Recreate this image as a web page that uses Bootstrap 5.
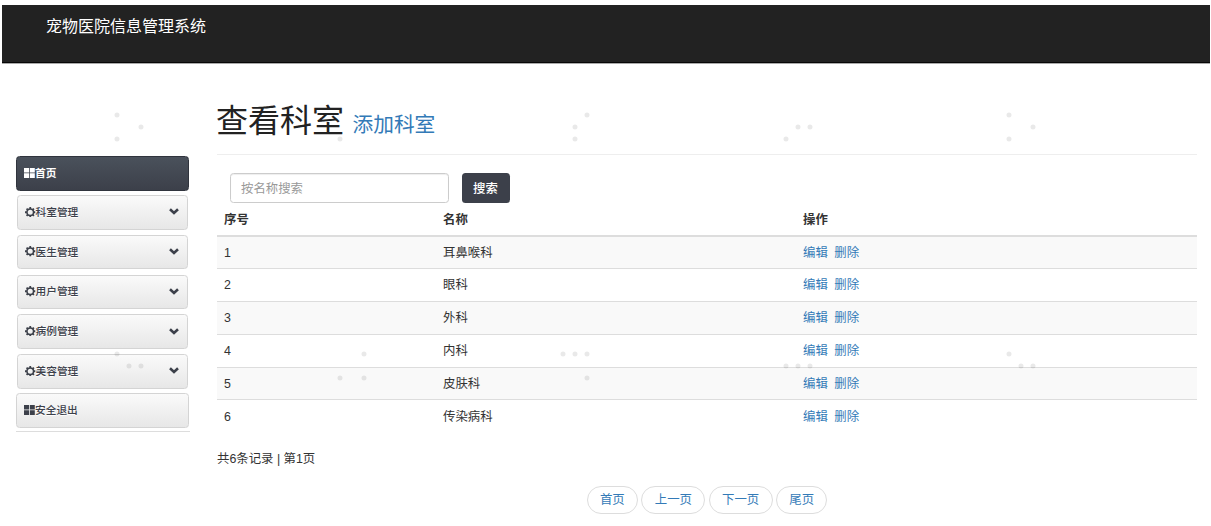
<!DOCTYPE html>
<html lang="zh-CN">
<head>
<meta charset="utf-8">
<meta name="viewport" content="width=device-width, initial-scale=1">
<title>宠物医院信息管理系统</title>
<link href="https://cdn.jsdelivr.net/npm/bootstrap@5.3.0/dist/css/bootstrap.min.css" rel="stylesheet">
<style>
body{font-family:"Liberation Sans","Noto Sans CJK SC",sans-serif;font-size:12.4px;line-height:17.7px;color:#333;background:#fff;height:526px;overflow:hidden;padding:5px 1px 0 2px}
a{color:#337ab7;text-decoration:none}
.topbar{height:58px;background:#222;border-bottom:1px solid #080808;box-shadow:0 1px 0 #aaa;padding:0 44px}
.topbar .navbar-brand{font-size:16px;line-height:20px;padding:0;margin-top:12px;color:#fff}
.side{width:174px;margin-left:14px;margin-top:93px;flex:none;height:276px;border-bottom:1px solid #ddd}
.side-link{height:34.6px;flex:none;border:1px solid #d4d4d4;border-radius:3.5px;background:linear-gradient(#fafafa,#e7e7e7);color:#3c404a;font-size:10.7px;font-weight:500;line-height:16px;padding:0 8px 1px 7px;margin:0 2px 5.2px 1px;text-shadow:0 1px 0 #fff}
.side-link.wide{margin:0 1px 4.4px 0;padding-right:7px}
.side-link:nth-child(6){margin-bottom:4.4px}
.side-link.active{background:linear-gradient(#4a515b,#3c404a);border-color:#30343d;color:#fff;font-weight:700;text-shadow:none}
.side-link svg{flex:none}
.main{margin-left:27px;width:980px}
.page-title{height:92px;border-bottom:1px solid #eee;padding-top:37px;margin:0;font-size:32px;line-height:42px;font-weight:400;color:#222;white-space:nowrap;text-indent:-1px}
.page-title a{font-size:20.7px;margin-left:8.5px}
.search{padding:18px 0 0 13px;gap:13px}
.search .form-control{width:219px;height:30px;font-size:12.4px;line-height:18px;padding:6px 10px 4px;border-color:#ccc;border-radius:3.5px;box-shadow:inset 0 1px 1px rgba(0,0,0,.07)}
.search .form-control::placeholder{color:#999;opacity:1}
.search .btn{width:48px;height:30px;background:#3c404a;color:#fff;font-size:12.4px;font-weight:500;line-height:18px;padding:6px 1px 4px 0;border:0;border-radius:3.5px}
.dept{width:980px;table-layout:fixed;margin:0;color:#333}
.dept>:not(caption)>*>*{padding:1px 7px 0;height:32.8px;border-bottom:1px solid #ddd;vertical-align:middle;line-height:17px}
.dept>thead>tr>th{height:33px;border-bottom:2px solid #ddd;font-weight:700;padding-top:2px}
.dept>tbody>tr:last-child>*{border-bottom:0}
.dept>tbody>tr:nth-of-type(odd)>*{background:#f9f9f9;box-shadow:none}
.dept td a+a{margin-left:6.5px}
.count{margin:17.5px 0 0;line-height:18px}
.pager{gap:3.5px;margin:17.5px 0 0}
.pager .page-link{height:28.5px;border:1px solid #ddd;border-radius:14px;padding:4.5px 12.3px;font-size:12.4px;line-height:18px;color:#337ab7;background:#fff}
.dots{left:0;top:0;pointer-events:none}
</style>
</head>
<body>
<nav class="topbar navbar align-items-start"><a class="navbar-brand" href="#">宠物医院信息管理系统</a></nav>
<svg width="0" height="0" class="position-absolute">
<symbol id="gear" viewBox="0 0 10 10"><circle cx="5" cy="5" r="3.1" fill="none" stroke="currentColor" stroke-width="1.4"/><path d="M5 0v1.8M5 8.2V10M0 5h1.8M8.2 5H10M1.5 1.5l1.2 1.2M7.3 7.3l1.2 1.2M8.5 1.5L7.3 2.7M2.7 7.3L1.5 8.5" stroke="currentColor" stroke-width="1.7"/></symbol>
<symbol id="grid" viewBox="0 0 11 10"><path d="M0 0h5v4.5H0zM5.8 0h5v4.5h-5zM0 5.3h5V10H0zM5.8 5.3h5V10h-5z" fill="currentColor"/></symbol>
<symbol id="chev" viewBox="0 0 10 7"><path d="M1 1.3l4 3.7 4-3.7" fill="none" stroke="currentColor" stroke-width="2.6"/></symbol>
</svg>
<div class="d-flex">
<aside class="side d-flex flex-column">
<a href="#" class="side-link wide active d-flex align-items-center"><svg width="11" height="10"><use href="#grid"/></svg><span>首页</span></a>
<a href="#" class="side-link d-flex align-items-center"><svg width="10.5" height="10.5"><use href="#gear"/></svg><span>科室管理</span><svg class="ms-auto" width="10" height="7"><use href="#chev"/></svg></a>
<a href="#" class="side-link d-flex align-items-center"><svg width="10.5" height="10.5"><use href="#gear"/></svg><span>医生管理</span><svg class="ms-auto" width="10" height="7"><use href="#chev"/></svg></a>
<a href="#" class="side-link d-flex align-items-center"><svg width="10.5" height="10.5"><use href="#gear"/></svg><span>用户管理</span><svg class="ms-auto" width="10" height="7"><use href="#chev"/></svg></a>
<a href="#" class="side-link d-flex align-items-center"><svg width="10.5" height="10.5"><use href="#gear"/></svg><span>病例管理</span><svg class="ms-auto" width="10" height="7"><use href="#chev"/></svg></a>
<a href="#" class="side-link d-flex align-items-center"><svg width="10.5" height="10.5"><use href="#gear"/></svg><span>美容管理</span><svg class="ms-auto" width="10" height="7"><use href="#chev"/></svg></a>
<a href="#" class="side-link wide d-flex align-items-center"><svg width="11" height="10"><use href="#grid"/></svg><span>安全退出</span></a>
</aside>
<main class="main">
<h1 class="page-title">查看科室<a href="#">添加科室</a></h1>
<form class="search d-flex"><input class="form-control" type="text" placeholder="按名称搜索"><button class="btn" type="button">搜索</button></form>
<table class="table dept">
<colgroup><col style="width:219px"><col style="width:360px"><col></colgroup>
<thead><tr><th>序号</th><th>名称</th><th>操作</th></tr></thead>
<tbody>
<tr><td>1</td><td>耳鼻喉科</td><td><a href="#">编辑</a><a href="#">删除</a></td></tr>
<tr><td>2</td><td>眼科</td><td><a href="#">编辑</a><a href="#">删除</a></td></tr>
<tr><td>3</td><td>外科</td><td><a href="#">编辑</a><a href="#">删除</a></td></tr>
<tr><td>4</td><td>内科</td><td><a href="#">编辑</a><a href="#">删除</a></td></tr>
<tr><td>5</td><td>皮肤科</td><td><a href="#">编辑</a><a href="#">删除</a></td></tr>
<tr><td>6</td><td>传染病科</td><td><a href="#">编辑</a><a href="#">删除</a></td></tr>
</tbody>
</table>
<p class="count">共6条记录 | 第1页</p>
<ul class="pager list-unstyled d-flex justify-content-center">
<li><a class="page-link" href="#">首页</a></li><li><a class="page-link" href="#">上一页</a></li><li><a class="page-link" href="#">下一页</a></li><li><a class="page-link" href="#">尾页</a></li>
</ul>
</main>
</div>
<svg class="dots position-absolute" width="1211" height="526"><path fill="none" stroke="#000" stroke-opacity=".085" stroke-width="5" stroke-linecap="round" d="M117 115h0M141 127h0M117 139h0M340 139h0M587 115h0M575 127h0M575 139h0M786 139h0M798 127h0M810 127h0M1009 115h0M1033 127h0M1009 139h0M117 354h0M129 366h0M141 366h0M364 354h0M340 378h0M364 378h0M563 354h0M575 354h0M587 354h0M587 378h0M786 366h0M798 366h0M810 366h0M1009 354h0M1021 366h0M1033 366h0"/></svg>
<script src="https://cdn.jsdelivr.net/npm/bootstrap@5.3.0/dist/js/bootstrap.bundle.min.js"></script>
</body>
</html>
